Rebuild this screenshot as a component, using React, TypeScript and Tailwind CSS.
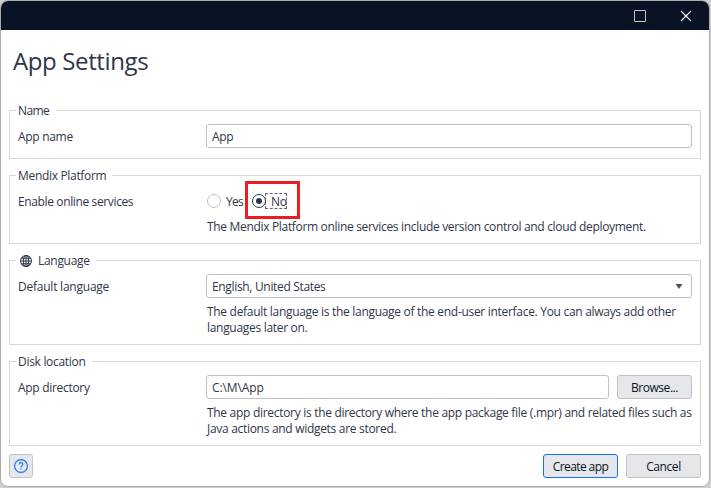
import type { ReactNode } from "react";

const inputBox =
  "flex h-6 items-center rounded-[3px] border border-[#c0c1c7] bg-white px-[5px] pt-px";
const button =
  "flex h-6 items-center justify-center rounded-[3px] border bg-[#e6e7ea] text-[#0a1326]";

function Group({ legend, height, children }: { legend: ReactNode; height: string; children: ReactNode }) {
  return (
    <section className={`relative border border-[#d7d7da] ${height} pr-2 pl-2 pt-[13px]`}>
      <h2 className="absolute -top-[8px] left-[6px] flex h-4 items-center bg-white pr-[6px] pl-[2px] leading-4 whitespace-nowrap">
        {legend}
      </h2>
      {children}
    </section>
  );
}

function Row({ label, children, help }: { label: ReactNode; children: ReactNode; help?: ReactNode }) {
  return (
    <div className="grid grid-cols-[188px_486px]">
      <div className="flex h-6 items-center pt-px whitespace-nowrap">{label}</div>
      <div>
        {children}
        {help && <div className="mt-[6px] pl-px leading-4 whitespace-nowrap">{help}</div>}
      </div>
    </div>
  );
}

export default function App() {
  return (
    <div className="h-[488px] w-[711px] overflow-hidden bg-[#cfcfcf] pr-px pb-px">
      <div className="flex h-[487px] w-[710px] flex-col overflow-hidden rounded-[8px] border border-[#ababab] bg-white font-['Open_Sans','Noto_Sans',sans-serif] text-[12px] text-[#2f364a]">
        <header className="flex h-[29px] shrink-0 items-center justify-end gap-[34px] bg-[#0a1325] pr-[17px]">
          <svg width="12" height="12" viewBox="0 0 12 12" fill="none" stroke="#c3c6cc">
            <rect x="0.5" y="0.5" width="11" height="11" rx="0.5" />
          </svg>
          <svg width="12" height="12" viewBox="0 0 12 12" stroke="#ffffff" strokeWidth="1.1">
            <path d="M1 1 11 11M11 1 1 11" />
          </svg>
        </header>
        <h1 className="h-20 shrink-0 pt-[13px] pl-3 text-[24px] leading-9 tracking-[-0.38px]">App Settings</h1>
        <main className="flex flex-col gap-4 px-2">
          <Group height="h-[49px]" legend={<span className="mr-[2px] tracking-[-0.6px]">Name</span>}>
            <Row label={<span className="tracking-[-0.3px]">App name</span>}>
              <div className={inputBox}>
                <span className="tracking-[-0.3px]">App</span>
              </div>
            </Row>
          </Group>
          <Group height="h-[69px]" legend={<span className="tracking-[-0.32px]">Mendix Platform</span>}>
            <Row
              label={<span className="tracking-[-0.37px]">Enable online services</span>}
              help={<span className="tracking-[-0.322px]">The Mendix Platform online services include version control and cloud deployment.</span>}
            >
              <div className="relative flex h-6 items-center pl-px">
                <span className="size-[14px] rounded-full border border-[#c0c1c7]" />
                <span className="ml-[5px] w-[26px] pt-[2px] tracking-[-0.7px]">Yes</span>
                <span className="flex size-[14px] items-center justify-center rounded-full border border-[#2f364a]">
                  <span className="size-[6px] rounded-full bg-[#2f364a]" />
                </span>
                <span className="ml-[5px] pt-[2px] tracking-[-0.3px]">No</span>
                <span className="absolute top-[4px] left-[59px] h-4 w-[22px] border border-dashed border-[#666]" />
                <span className="absolute -top-2 left-[39px] h-[38px] w-[55px] border-3 border-[#ed1c24]" />
              </div>
            </Row>
          </Group>
          <Group
            height="h-[85px]"
            legend={
              <>
                <svg className="mr-[6px] ml-[2px]" width="12" height="12" viewBox="0 0 13 13" fill="none" stroke="#2f364a" strokeWidth="1.1">
                  <circle cx="6.5" cy="6.5" r="5.9" />
                  <ellipse cx="6.5" cy="6.5" rx="2.9" ry="5.9" />
                  <path d="M6.5.6v11.8M.6 6.5h11.8M1.5 3.5h10M1.5 9.5h10" />
                </svg>
                <span className="tracking-[-0.3px]">Language</span>
              </>
            }
          >
            <Row
              label={<span className="tracking-[-0.23px]">Default language</span>}
              help={
                <>
                  <span className="tracking-[-0.3px]">
                    The default language is the language of the end-user interface. You can always add other
                  </span>
                  <br />
                  <span className="tracking-[-0.3px]">languages later on.</span>
                </>
              }
            >
              <div className={`${inputBox} justify-between`}>
                <span className="tracking-[-0.33px]">English, United States</span>
                <svg className="mr-[3px] mb-px" width="8" height="5" viewBox="0 0 8 5" fill="#4c5262">
                  <path d="M.5 0h7L4 5z" />
                </svg>
              </div>
            </Row>
          </Group>
          <Group height="h-[85px]" legend={<span className="tracking-[-0.3px]">Disk location</span>}>
            <Row
              label={<span className="tracking-[-0.3px]">App directory</span>}
              help={
                <>
                  <span className="tracking-[-0.3px]">
                    The app directory is the directory where the app package file (.mpr) and related files such as
                  </span>
                  <br />
                  <span className="tracking-[-0.3px]">Java actions and widgets are stored.</span>
                </>
              }
            >
              <div className="flex gap-2">
                <div className={`${inputBox} w-[403px]`}>
                  <span className="tracking-[-0.1px]">C:\M\App</span>
                </div>
                <div className={`${button} w-[75px] border-[#c0c1c7] pt-px tracking-[-0.45px]`}>Browse...</div>
              </div>
            </Row>
          </Group>
        </main>
        <footer className="mt-2 flex items-center gap-2 px-2">
          <div className={`${button} mr-auto w-6 border-[#c0c1c7]`}>
            <svg width="14" height="14" viewBox="0 0 14 14" fill="none" stroke="#0f6fff" strokeWidth="1.1">
              <circle cx="7" cy="7" r="6.4" />
              <path d="M5.1 5.5C5.1 4.3 5.9 3.6 7 3.6s1.9.7 1.9 1.7c0 1.4-1.9 1.4-1.9 3M7 9.4v1.2" />
            </svg>
          </div>
          <div className={`${button} w-[75px] border-[#1570ff] pt-px tracking-[-0.6px]`}>Create app</div>
          <div className={`${button} w-[75px] border-[#c0c1c7] pt-px tracking-[-0.4px]`}>Cancel</div>
        </footer>
      </div>
    </div>
  );
}
